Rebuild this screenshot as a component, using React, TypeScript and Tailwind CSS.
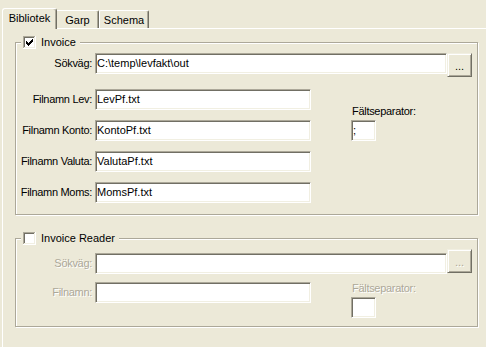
import React from "react";

const sunken =
  "border border-t-[#ACA899] border-l-[#ACA899] border-b-white border-r-white shadow-[inset_1px_1px_0_#716F64,inset_-1px_-1px_0_#F1EFE2] bg-white";
const raised =
  "border border-t-[#F1EFE2] border-l-[#F1EFE2] border-b-[#716F64] border-r-[#716F64] shadow-[inset_1px_1px_0_#fff,inset_-1px_-1px_0_#ACA899] bg-[#ECE9D8]";
const disabledText = "text-[#ACA899] [text-shadow:1px_1px_0_#fff]";

function CheckBox({ checked }: { checked: boolean }) {
  const cols: [number, number][] = [
    [3, 5],
    [4, 6],
    [5, 7],
    [6, 6],
    [7, 5],
    [8, 4],
    [9, 3],
  ];
  return (
    <svg width="13" height="13" viewBox="0 0 13 13" shapeRendering="crispEdges" className="block shrink-0">
      <rect x="0" y="0" width="13" height="13" fill="#ffffff" />
      <rect x="0" y="0" width="12" height="1" fill="#ACA899" />
      <rect x="0" y="0" width="1" height="12" fill="#ACA899" />
      <rect x="1" y="1" width="10" height="1" fill="#716F64" />
      <rect x="1" y="1" width="1" height="10" fill="#716F64" />
      <rect x="1" y="11" width="11" height="1" fill="#F1EFE2" />
      <rect x="11" y="1" width="1" height="11" fill="#F1EFE2" />
      {checked &&
        cols.map(([x, y]) => <rect key={x} x={x} y={y} width="1" height="3" fill="#000" />)}
    </svg>
  );
}

function Label({ text, disabled }: { text: string; disabled?: boolean }) {
  return (
    <div
      className={`w-[76px] h-[21px] flex items-center justify-end whitespace-nowrap tracking-[-0.3px] ${
        disabled ? disabledText : ""
      }`}
    >
      {text}
    </div>
  );
}

function TextBox({ value, width }: { value?: string; width: string }) {
  return (
    <div className={`${sunken} ${width} h-[21px] flex items-center pl-[1px] whitespace-nowrap overflow-hidden`}>
      {value}
    </div>
  );
}

function Legend({ checked, text }: { checked: boolean; text: string }) {
  return (
    <div className="absolute left-[5px] top-[-7px] flex items-center gap-[5px] bg-[#ECE9D8] pl-[2px] pr-[4px] h-[13px]">
      <CheckBox checked={checked} />
      <span className="whitespace-nowrap">{text}</span>
    </div>
  );
}

export default function App() {
  return (
    <div className="w-[486px] h-[347px] overflow-hidden bg-[#ECE9D8] pt-[8px] pl-[2px] text-[11px] leading-[13px] text-black font-['Liberation_Sans',Arial,sans-serif]">
      {/* Tabs */}
      <div className="flex items-end h-[20px]">
        <div className="relative z-10 -mb-px h-[21px] w-[55px] rounded-t-[3px] border-l border-t border-r border-l-white border-t-white border-r-[#716F64] shadow-[inset_-1px_0_0_#ACA899] bg-[#ECE9D8] pt-[3px] text-center">
          Bibliotek
        </div>
        <div className="h-[18px] w-[42px] rounded-tr-[2px] border-t border-r border-t-white border-r-[#716F64] shadow-[inset_-1px_0_0_#ACA899] pt-[3px] text-center">
          Garp
        </div>
        <div className="h-[18px] w-[50px] rounded-t-[2px] border-t border-l border-r border-t-white border-l-white border-r-[#716F64] shadow-[inset_-1px_0_0_#ACA899] pt-[3px] text-center">
          Schema
        </div>
      </div>

      {/* Panel */}
      <div className="border-t border-l border-white h-[330px] pl-[12px] pt-[13px]">
        {/* Group 1 */}
        <div className="relative w-[463px] h-[173px] border border-[#ACA899] shadow-[inset_1px_1px_0_#fff,1px_1px_0_#fff] pt-[10px]">
          <Legend checked={true} text="Invoice" />
          <div className="flex items-start">
            <Label text="Sökväg:" />
            <div className="ml-[3px]">
              <TextBox value={"C:\\temp\\levfakt\\out"} width="w-[352px]" />
            </div>
            <div className={`${raised} w-[25px] h-[24px] flex items-center justify-center pt-[2px]`}>...</div>
          </div>
          <div className="flex mt-[12px]">
            <div className="flex flex-col gap-[10px]">
              {[
                ["Filnamn Lev:", "LevPf.txt"],
                ["Filnamn Konto:", "KontoPf.txt"],
                ["Filnamn Valuta:", "ValutaPf.txt"],
                ["Filnamn Moms:", "MomsPf.txt"],
              ].map(([l, v]) => (
                <div key={l} className="flex">
                  <Label text={l} />
                  <div className="ml-[3px]">
                    <TextBox value={v} width="w-[216px]" />
                  </div>
                </div>
              ))}
            </div>
            <div className="ml-[40px] pt-[16px] flex flex-col">
              <div className="pl-[1px] whitespace-nowrap tracking-[-0.3px]">Fältseparator:</div>
              <div className="mt-[2px]">
                <TextBox value=";" width="w-[25px]" />
              </div>
            </div>
          </div>
        </div>

        {/* Group 2 */}
        <div className="relative mt-[23px] w-[463px] h-[89px] border border-[#ACA899] shadow-[inset_1px_1px_0_#fff,1px_1px_0_#fff] pt-[10px]">
          <Legend checked={false} text="Invoice Reader" />
          <div className="flex items-start">
            <div className="mt-[4px]">
              <Label text="Sökväg:" disabled />
            </div>
            <div className="ml-[3px] mt-[4px]">
              <TextBox width="w-[352px]" />
            </div>
            <div className={`${raised} ${disabledText} w-[25px] h-[24px] flex items-center justify-center pt-[2px]`}>
              ...
            </div>
          </div>
          <div className="flex mt-[8px]">
            <div className="flex">
              <Label text="Filnamn:" disabled />
              <div className="ml-[3px]">
                <TextBox width="w-[216px]" />
              </div>
            </div>
            <div className="ml-[40px] flex flex-col">
              <div className={`pl-[1px] whitespace-nowrap tracking-[-0.3px] ${disabledText}`}>Fältseparator:</div>
              <div className="mt-[2px]">
                <TextBox width="w-[25px]" />
              </div>
            </div>
          </div>
        </div>
      </div>
    </div>
  );
}
